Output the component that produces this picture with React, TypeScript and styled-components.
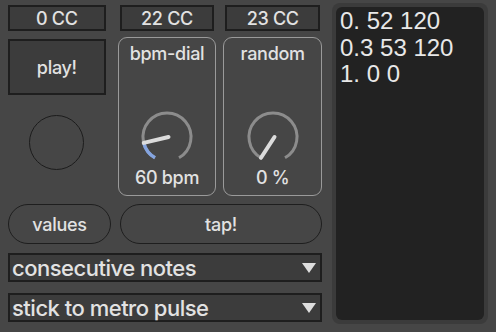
import React from "react"
import styled, { createGlobalStyle } from "styled-components"

const GlobalStyle = createGlobalStyle`
  html, body {
    margin: 0;
    padding: 0;
    background: #464646;
  }
  body {
    font-family: Inter, "Liberation Sans", sans-serif;
    color: #e2e2e2;
  }
`

const Device = styled.main`
  width: 496px;
  height: 332px;
  display: flex;
  background: #464646;
  overflow: hidden;
`

const LeftSide = styled.section`
  width: 314px;
  padding: 5px 0 0 8px;
  display: flex;
  flex-direction: column;
`

const TopArea = styled.div`
  display: flex;
  height: 191px;
`

const Column = styled.div<{ $width: number; $gap: number }>`
  width: ${(p) => p.$width}px;
  margin-right: ${(p) => p.$gap}px;
  display: flex;
  flex-direction: column;
  align-items: stretch;
`

const CCBox = styled.div<{ $inset?: number }>`
  height: 26px;
  box-sizing: border-box;
  margin: 0 ${(p) => p.$inset || 0}px;
  border: 2px solid #1e1e1e;
  background: #3c3c3c;
  display: flex;
  align-items: center;
  justify-content: center;
  font-size: 18px;
  font-weight: 500;
  letter-spacing: -0.3px;
`

const PlayBox = styled.div`
  margin-top: 8px;
  height: 56px;
  box-sizing: border-box;
  border: 2px solid #1e1e1e;
  background: #3c3c3c;
  display: flex;
  align-items: center;
  justify-content: center;
  font-size: 18px;
  font-weight: 500;
  letter-spacing: -0.3px;
`

const Led = styled.div`
  margin: 20px auto 0;
  width: 55px;
  height: 55px;
  box-sizing: border-box;
  border-radius: 50%;
  border: 1.5px solid #1c1c1c;
`

const DialPanel = styled.div`
  margin-top: 6px;
  height: 159px;
  box-sizing: border-box;
  border: 1.5px solid #9a9a9a;
  border-radius: 9px;
  display: flex;
  flex-direction: column;
  align-items: center;
`

const DialLabel = styled.div`
  margin-top: 5px;
  line-height: 22px;
  font-size: 18px;
  font-weight: 500;
  letter-spacing: -0.3px;
`

const KnobSvg = styled.svg`
  margin-top: 42px;
  width: 60px;
  height: 60px;
  display: block;
`

const DialValue = styled.div`
  margin-top: 1px;
  line-height: 20px;
  font-size: 18px;
  font-weight: 500;
  letter-spacing: -0.3px;
`

const ButtonRow = styled.div`
  margin-top: 8px;
  display: flex;
  gap: 9px;
`

const PillButton = styled.div<{ $width: number }>`
  width: ${(p) => p.$width}px;
  height: 40px;
  box-sizing: border-box;
  border: 1.5px solid #1e1e1e;
  border-radius: 20px;
  display: flex;
  align-items: center;
  justify-content: center;
  font-size: 18px;
  font-weight: 500;
  letter-spacing: -0.3px;
`

const Menu = styled.div`
  margin-top: 9px;
  width: 314px;
  height: 29px;
  box-sizing: border-box;
  border: 2px solid #1e1e1e;
  background: #3c3c3c;
  display: flex;
  align-items: center;
  justify-content: space-between;
  padding: 0 4px 0 2px;
  font-size: 22px;
  font-weight: 500;
  letter-spacing: -0.5px;
  & + & {
    margin-top: 11px;
  }
`

const MenuArrow = styled.span`
  width: 0;
  height: 0;
  border-left: 7px solid transparent;
  border-right: 7px solid transparent;
  border-top: 10px solid #dedede;
`

const MessageFrame = styled.section`
  margin: 3px 0 0 10px;
  width: 156px;
  height: 321px;
  box-sizing: border-box;
  padding: 4px;
  background: #3b3b3b;
  border-radius: 8px;
`

const MessageBox = styled.div`
  height: 100%;
  box-sizing: border-box;
  background: #222222;
  border-radius: 6px;
  padding: 1px 4px;
  font-family: "Liberation Sans", Arial, sans-serif;
  font-size: 24px;
  line-height: 26.7px;
  color: #e8e8e8;
`

const START = 120
const SWEEP = 300
const R = 24

const pt = (deg: number) => {
  const a = (deg * Math.PI) / 180
  return [30 + R * Math.cos(a), 30 + R * Math.sin(a)]
}

const Knob = ({ value }: { value: number }) => {
  const [sx, sy] = pt(START)
  const [ex, ey] = pt(START + SWEEP)
  const ang = START + SWEEP * value
  const [vx, vy] = pt(ang)
  return (
    <KnobSvg viewBox="0 0 60 60">
      <path d={`M ${sx} ${sy} A ${R} ${R} 0 1 1 ${ex} ${ey}`} fill="none" stroke="#8c8c8c" strokeWidth="3" />
      {value > 0 && (
        <path
          d={`M ${sx} ${sy} A ${R} ${R} 0 ${SWEEP * value > 180 ? 1 : 0} 1 ${vx} ${vy}`}
          fill="none"
          stroke="#84a4e0"
          strokeWidth="3.5"
        />
      )}
      <line x1={vx} y1={vy} x2={31.5} y2={30} stroke="#dcdcdc" strokeWidth="4" strokeLinecap="round" />
    </KnobSvg>
  )
}

const App = () => {
  return (
    <>
      <GlobalStyle />
      <Device>
        <LeftSide>
          <TopArea>
            <Column $width={98} $gap={12}>
              <CCBox>0 CC</CCBox>
              <PlayBox>play!</PlayBox>
              <Led />
            </Column>
            <Column $width={99} $gap={7}>
              <CCBox $inset={2}>22 CC</CCBox>
              <DialPanel>
                <DialLabel>bpm-dial</DialLabel>
                <Knob value={0.153} />
                <DialValue>60 bpm</DialValue>
              </DialPanel>
            </Column>
            <Column $width={99} $gap={0}>
              <CCBox $inset={2}>23 CC</CCBox>
              <DialPanel>
                <DialLabel>random</DialLabel>
                <Knob value={0} />
                <DialValue>0 %</DialValue>
              </DialPanel>
            </Column>
          </TopArea>
          <ButtonRow>
            <PillButton $width={103}>values</PillButton>
            <PillButton $width={202}>tap!</PillButton>
          </ButtonRow>
          <Menu>
            <span>consecutive notes</span>
            <MenuArrow />
          </Menu>
          <Menu>
            <span>stick to metro pulse</span>
            <MenuArrow />
          </Menu>
        </LeftSide>
        <MessageFrame>
          <MessageBox>
            <div>0. 52 120</div>
            <div>0.3 53 120</div>
            <div>1. 0 0</div>
          </MessageBox>
        </MessageFrame>
      </Device>
    </>
  )
}

export default App
